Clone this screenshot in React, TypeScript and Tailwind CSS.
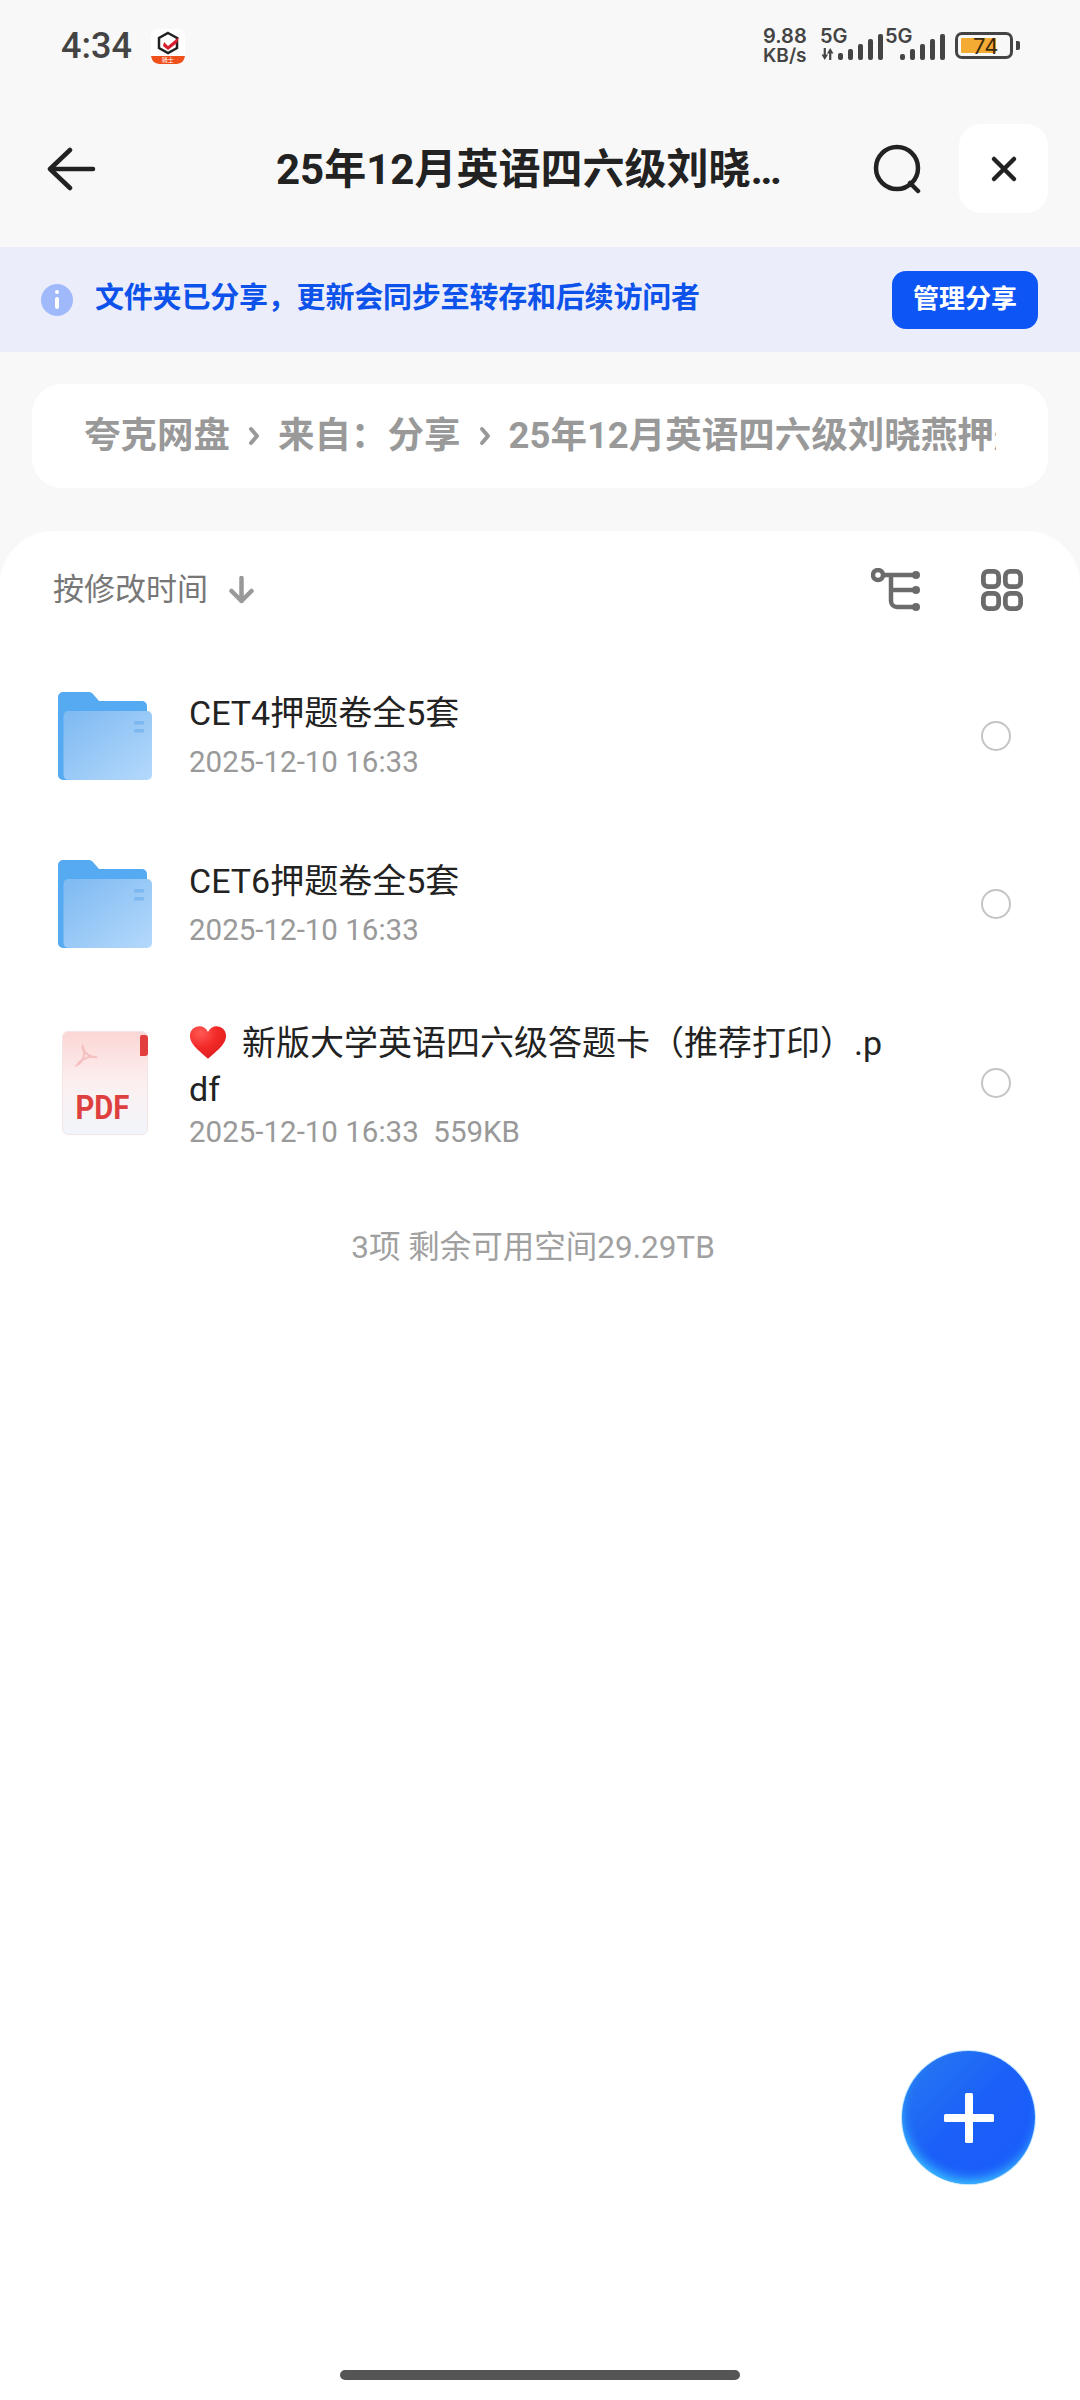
const font = { fontFamily: '"Roboto", "Noto Sans CJK SC", sans-serif' };

function AppBadge() {
  return (
    <div className="w-[34px] h-[35px] rounded-[8px] bg-white flex flex-col items-center justify-between overflow-hidden">
      <svg viewBox="0 0 34 26" className="w-[34px] h-[26px]">
        <path d="M17 4l9 5v10l-9 5-9-5V9z" fill="none" stroke="#222" strokeWidth="2.500" />
        <path d="M13 13l4 4 11-9-2 6-9 7-5-4z" fill="#d81e2c" />
      </svg>
      <div className="w-full h-[8px] bg-[#f0501c] rounded-b-[12px] text-[6px] leading-[8px] text-white text-center">骑士</div>
    </div>
  );
}

function Signal({ tops, className }: { tops: number[]; className: string }) {
  return (
    <div className={`flex items-end gap-[5px] h-[27px] ${className}`}>
      {tops.map((h, i) => (
        <div key={i} className="w-[5px] rounded-[2px] bg-[#444]" style={{ height: h }} />
      ))}
    </div>
  );
}

function StatusBar() {
  return (
    <div className="h-[90px] flex items-start justify-between pl-[61px] pr-[60px] pt-[26px]">
      <div className="flex items-center gap-[19px] mt-[1px]">
        <span className="text-[36px] leading-[38px] font-medium text-[#444]">4:34</span>
        <AppBadge />
      </div>
      <div className="flex items-start text-[#444]">
        <div className="text-[20px] leading-[19px] font-semibold w-[57px] whitespace-nowrap mt-[1px] font-['Inter']">
          <div>9.88</div>
          <div className="text-[19px]">KB/s</div>
        </div>
        <div className="w-[18px] mt-[2px]">
          <div className="text-[20px] leading-[16px] font-semibold whitespace-nowrap font-['Inter']">5G</div>
          <svg viewBox="0 0 13 11" className="w-[15px] h-[12px] mt-[4px]" fill="#444">
            <path d="M3 0h2v6h2L4 11 1 6h2zM9 0l3 5h-2v6H8V5H6z" />
          </svg>
        </div>
        <Signal tops={[7, 11, 16, 21, 26]} className="mt-[7px] w-[47px]" />
        <div className="w-[15px] mt-[2px] text-[20px] leading-[16px] font-semibold whitespace-nowrap font-['Inter']">5G</div>
        <Signal tops={[6, 11, 16, 21, 26]} className="mt-[7px] w-[45px]" />
        <div className="ml-[10px] mt-[6px] flex items-center gap-[3px]">
          <div className="relative w-[58px] h-[27px] rounded-[7px] border-[3px] border-[#444] pl-[3px] py-[3px]">
            <div className="h-full w-[35px] bg-[#f4ab33] rounded-[1px]" />
            <span className="absolute inset-0 pl-[15px] flex items-center text-[22px] leading-none text-[#3a2c10] font-['Inter']">74</span>
          </div>
          <div className="w-[4px] h-[9px] bg-[#444] rounded-r-[2px]" />
        </div>
      </div>
    </div>
  );
}

function Header() {
  return (
    <div className="h-[89px] mt-[34px] flex items-center pl-[46px] pr-[32px]">
      <svg viewBox="0 0 50 44" className="w-[50px] h-[44px] shrink-0" fill="none" stroke="#222" strokeWidth="4.500" strokeLinecap="round" strokeLinejoin="round">
        <path d="M24 3L4 22l20 19" />
        <path d="M5 22h42" />
      </svg>
      <div className="flex-1 pl-[180px] pt-[3px] text-[42px] leading-[50px] font-bold text-[#222] whitespace-nowrap">
        25年12月英语四六级刘晓…
      </div>
      <svg viewBox="0 0 50 50" className="w-[50px] h-[50px] shrink-0 mr-[36px] mt-[1px]" fill="none" stroke="#222" strokeWidth="4.500" strokeLinecap="round">
        <circle cx="24" cy="24" r="21" />
        <path d="M37 39l8 8" />
      </svg>
      <div className="w-[89px] h-[89px] rounded-[22px] bg-white flex items-center justify-center shrink-0">
        <svg viewBox="0 0 28 28" className="w-[28px] h-[28px]" fill="none" stroke="#222" strokeWidth="4.500" strokeLinecap="round">
          <path d="M4 4l20 20M24 4L4 24" />
        </svg>
      </div>
    </div>
  );
}

function Banner() {
  return (
    <div className="mt-[34px] h-[105px] bg-[#ebeefa] flex items-center pl-[41px] pr-[42px]">
      <div className="w-[32px] h-[32px] rounded-full bg-[#a0b9fb] flex flex-col items-center justify-center gap-[3px] shrink-0">
        <div className="w-[4px] h-[4px] bg-white rounded-full" />
        <div className="w-[4px] h-[12px] bg-white rounded-[2px]" />
      </div>
      <span className="ml-[22px] flex-1 pb-[3px] text-[29px] leading-[40px] font-bold text-[#0d52ea] whitespace-nowrap tracking-[-0.2px]">
        文件夹已分享，更新会同步至转存和后续访问者
      </span>
      <div className="w-[146px] h-[58px] rounded-[14px] bg-[#0d55f5] text-white text-[26px] font-bold flex items-center justify-center">
        管理分享
      </div>
    </div>
  );
}

function Chevron() {
  return (
    <svg viewBox="0 0 12 20" className="w-[12px] h-[20px] mx-[18px] shrink-0" fill="none" stroke="#999" strokeWidth="4" strokeLinecap="round" strokeLinejoin="round">
      <path d="M3 3l6 7-6 7" />
    </svg>
  );
}

function Breadcrumb() {
  return (
    <div className="mt-[32px] mx-[32px] h-[104px] rounded-[30px] bg-white pl-[52px] pr-[52px] flex items-center">
      <div className="flex items-center overflow-hidden whitespace-nowrap text-[36.5px] leading-[48px] font-bold text-[#999]">
        <span>夸克网盘</span>
        <Chevron />
        <span>来自：分享</span>
        <Chevron />
        <span>25年12月英语四六级刘晓燕押题卷</span>
      </div>
    </div>
  );
}

function FolderIcon() {
  return (
    <svg viewBox="0 0 94 88" className="w-[94px] h-[88px] shrink-0">
      <defs>
        <linearGradient id="fold" x1="0" y1="0" x2="1" y2="1">
          <stop offset="0" stopColor="#7db9f1" />
          <stop offset="1" stopColor="#b5d9fc" />
        </linearGradient>
      </defs>
      <path d="M0 5a5 5 0 0 1 5-5h26a5 5 0 0 1 4 2l6 7h43a5 5 0 0 1 5 5v74H5a5 5 0 0 1-5-5z" fill="#55aaf1" />
      <rect x="5.500" y="19" width="88.500" height="69" rx="5" fill="url(#fold)" />
      <rect x="76" y="29" width="10" height="3.500" rx="1" fill="#7db8f0" />
      <rect x="76" y="37" width="10" height="3.500" rx="1" fill="#7db8f0" />
    </svg>
  );
}

function PdfIcon() {
  return (
    <div className="relative w-[86px] h-[104px] shrink-0 ml-[4px]">
      <div className="absolute inset-0 rounded-[6px] border border-[#f5e4e4] bg-gradient-to-b from-[#fbd6d5] via-[#fcf0f0] to-[#f1f5fb] flex flex-col items-center">
        <svg viewBox="0 0 24 24" className="absolute left-[12px] top-[12px] w-[23px] h-[23px]" fill="none" stroke="#f5bfc0" strokeWidth="2">
          <path d="M8 2c-1 4 4 11 15 12-7-2-16 1-21 8 5-2 10-10 6-20z" />
        </svg>
        <span className="mt-[57px] -ml-[6px] text-[34px] leading-[36px] font-bold text-[#de4040] scale-x-[0.86]">PDF</span>
      </div>
      <div className="absolute right-0 top-[4px] w-[8px] h-[21px] rounded-r-[3px] rounded-tl-[2px] bg-[#e33e3e]" />
    </div>
  );
}

function Radio() {
  return <div className="w-[30px] h-[30px] rounded-full border-2 border-[#c4c4c4] shrink-0" />;
}

function FileRow({ name, meta, icon, rowHeight, nameClass = "", metaClass = "mt-[6px]" }: { name: React.ReactNode; meta: string; icon: React.ReactNode; rowHeight: string; nameClass?: string; metaClass?: string }) {
  return (
    <div className={`flex items-center pl-[58px] pr-[69px] ${rowHeight}`}>
      <div className="w-[94px] flex justify-start">{icon}</div>
      <div className="ml-[37px] flex-1 min-w-0 pr-[92px]">
        <div className={`text-[34px] leading-[46px] text-[#222] ${nameClass}`}>{name}</div>
        <div className={`text-[29.5px] leading-[40px] text-[#999] whitespace-pre ${metaClass}`}>{meta}</div>
      </div>
      <Radio />
    </div>
  );
}

function Heart() {
  return (
    <svg viewBox="0 0 40 36" className="inline-block w-[38px] h-[35px] align-[-5px] mr-[15px]">
      <defs>
        <radialGradient id="heart" cx="0.3" cy="0.2" r="0.9">
          <stop offset="0" stopColor="#ff5a55" />
          <stop offset="0.5" stopColor="#f22a28" />
          <stop offset="1" stopColor="#dc1c1c" />
        </radialGradient>
      </defs>
      <path d="M20 35C8 25 1 19 1 11 1 5 6 1 11 1c4 0 7 2 9 6 2-4 5-6 9-6 5 0 10 4 10 10 0 8-7 14-19 24z" fill="url(#heart)" />
    </svg>
  );
}

function FileList() {
  return (
    <div className="mt-[43px] rounded-t-[54px] bg-white flex-1">
      <div className="h-[118px] flex items-center pl-[53px] pr-[57px]">
        <span className="text-[31px] text-[#777]">按修改时间</span>
        <svg viewBox="0 0 26 28" className="ml-[20px] w-[27px] h-[28px]" fill="none" stroke="#999" strokeWidth="4.500" strokeLinecap="round" strokeLinejoin="round">
          <path d="M13 2v23M3 15l10 10 10-10" />
        </svg>
        <div className="flex-1" />
        <svg viewBox="0 0 52 44" className="w-[52px] h-[44px]" fill="none" stroke="#6b6b6b" strokeWidth="4.500">
          <circle cx="7" cy="7" r="5" />
          <path d="M12 7h32M20 7v26a6 6 0 0 0 6 6h18M20 22h24" />
          <circle cx="45" cy="7" r="4" fill="#6b6b6b" stroke="none" />
          <circle cx="45" cy="22" r="4" fill="#6b6b6b" stroke="none" />
          <circle cx="45" cy="39" r="4" fill="#6b6b6b" stroke="none" />
        </svg>
        <svg viewBox="0 0 44 44" className="ml-[58px] w-[42px] h-[42px]" fill="none" stroke="#6b6b6b" strokeWidth="5">
          <rect x="2.500" y="2.500" width="16" height="16" rx="5" />
          <rect x="25.500" y="2.500" width="16" height="16" rx="5" />
          <rect x="2.500" y="25.500" width="16" height="16" rx="5" />
          <rect x="25.500" y="25.500" width="16" height="16" rx="5" />
        </svg>
      </div>
      <div className="pt-[3px]">
        <FileRow rowHeight="h-[168px]" icon={<FolderIcon />} name="CET4押题卷全5套" meta="2025-12-10 16:33" />
        <FileRow rowHeight="h-[168px]" icon={<FolderIcon />} name="CET6押题卷全5套" meta="2025-12-10 16:33" />
        <FileRow
          rowHeight="h-[190px]"
          icon={<PdfIcon />}
          nameClass="pt-[6px]"
          metaClass=""
          name={<span className="break-all"><Heart />新版大学英语四六级答题卡（推荐打印）.pdf</span>}
          meta="2025-12-10 16:33  559KB"
        />
      </div>
      <div className="mt-[50px] pr-[14px] text-center text-[31.5px] leading-[40px] text-[#a0a0a0]">3项 剩余可用空间29.29TB</div>
    </div>
  );
}

export default function App() {
  return (
    <div className="relative h-[2400px] w-[1080px] overflow-hidden bg-[#f8f8f8] flex flex-col" style={font}>
      <StatusBar />
      <Header />
      <Banner />
      <Breadcrumb />
      <FileList />

      {/* floating add button */}
      <div className="absolute left-[902px] top-[2051px] w-[133px] h-[133px] rounded-full bg-gradient-to-br from-[#2a7bf0] via-[#1b5ff8] to-[#1a5cfb] flex items-center justify-center shadow-[inset_2px_-8px_12px_-4px_#3cc8ff,0_0_0_1px_#bfe6ff]">
        <svg viewBox="0 0 52 52" className="w-[52px] h-[52px]" fill="white">
          <rect x="22" y="1" width="8" height="50" rx="1.500" />
          <rect x="1" y="22" width="50" height="8" rx="1.500" />
        </svg>
      </div>

      {/* gesture bar */}
      <div className="absolute left-[340px] top-[2370px] w-[400px] h-[10px] rounded-full bg-[#555]" />
    </div>
  );
}
